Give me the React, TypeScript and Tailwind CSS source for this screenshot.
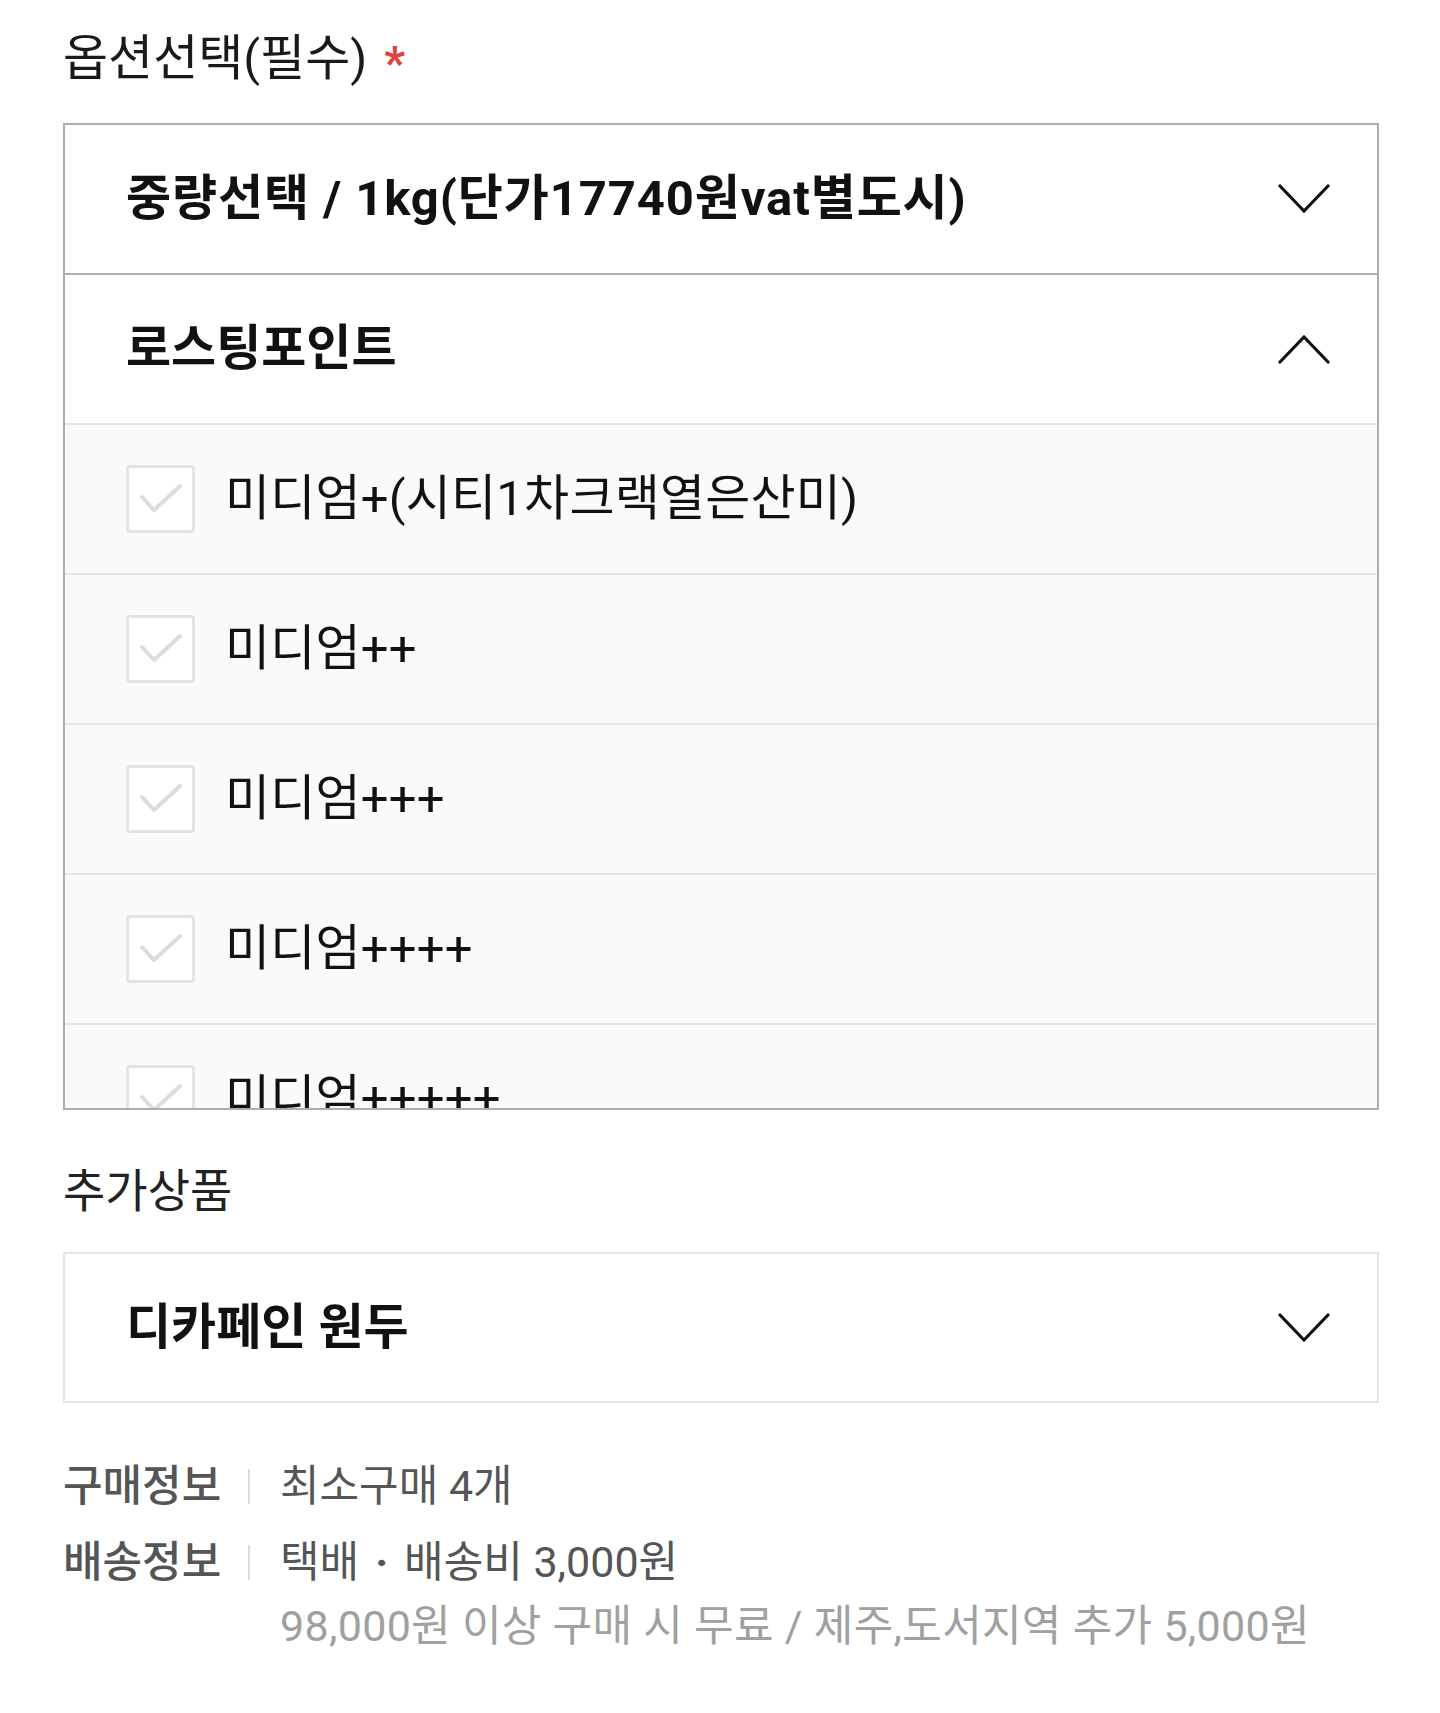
import React from "react";

function Chevron({ up = false }: { up?: boolean }) {
  return (
    <svg width="52" height="32" viewBox="0 0 52 32" fill="none" className="shrink-0">
      <path
        d={up ? "M2 29 L26 4 L50 29" : "M2 3 L26 28 L50 3"}
        stroke="#111"
        strokeWidth="3.2"
        strokeLinecap="round"
        strokeLinejoin="miter"
      />
    </svg>
  );
}

function CheckBox() {
  return (
    <div className="w-[69px] h-[68px] shrink-0 rounded-[4px] border-[3px] border-[#e4e4e4] bg-white flex items-center justify-center">
      <svg width="46" height="36" viewBox="0 0 46 36" fill="none">
        <path d="M4 16 L16 29 L42 5" stroke="#dcdcdc" strokeWidth="4" strokeLinecap="round" strokeLinejoin="round" />
      </svg>
    </div>
  );
}

const options = [
  "미디엄+(시티1차크랙열은산미)",
  "미디엄++",
  "미디엄+++",
  "미디엄++++",
  "미디엄+++++",
];

export default function App() {
  return (
    <div className="w-[1440px] min-h-[1713px] bg-white pl-[63px] pr-[61px] pt-[27px] font-['Roboto','Noto_Sans_CJK_KR',sans-serif] text-[#111]">
      <div className="flex items-center h-[64px] text-[49px] leading-[64px] text-[#1a1a1a]">
        <span>옵션선택(필수)</span>
        <span className="ml-[17px] text-[#e0413a] text-[46px] font-bold mt-[8px]">*</span>
      </div>

      <div className="mt-[32px] border-2 border-[#adadad] bg-white">
        <div className="h-[150px] border-b-2 border-[#adadad] flex items-center justify-between pl-[61px] pr-[47px]">
          <span className="text-[49px] font-bold tracking-[0.9px]">중량선택 / 1kg(단가17740원vat별도시)</span>
          <Chevron />
        </div>
        <div className="h-[150px] border-b-2 border-[#e6e6e6] flex items-center justify-between pl-[61px] pr-[47px]">
          <span className="text-[49px] font-bold">로스팅포인트</span>
          <Chevron up />
        </div>
        <div className="h-[683px] overflow-hidden bg-[#fafafa]">
          {options.map((o, i) => (
            <div
              key={i}
              className="h-[150px] border-b-2 border-[#e6e6e6] flex items-center pl-[61px] gap-[30px]"
            >
              <CheckBox />
              <span className="text-[49px] text-[#111] tracking-[0.2px]">{o}</span>
            </div>
          ))}
        </div>
      </div>

      <div className="mt-[51px] h-[60px] flex items-center text-[46px] text-[#222]">추가상품</div>

      <div className="mt-[31px] h-[151px] border-2 border-[#e4e4e4] flex items-center justify-between pl-[61px] pr-[47px]">
        <span className="text-[49px] font-bold">디카페인 원두</span>
        <Chevron />
      </div>

      <div className="mt-[51px] flex flex-col gap-[12px] text-[43px] leading-[64px]">
        <div className="flex items-start">
          <span className="w-[156px] shrink-0 whitespace-nowrap text-[#555] font-medium">구매정보</span>
          <span className="mt-[15px] ml-[29px] mr-[30px] w-[2px] h-[35px] bg-[#dddddd]" />
          <span className="text-[#555]">최소구매 4개</span>
        </div>
        <div className="flex items-start">
          <span className="w-[156px] shrink-0 whitespace-nowrap text-[#555] font-medium">배송정보</span>
          <span className="mt-[15px] ml-[29px] mr-[30px] w-[2px] h-[35px] bg-[#dddddd]" />
          <div className="flex flex-col">
            <span className="text-[#555] flex items-center">
              <span>택배</span>
              <span className="mx-[16px] font-bold">·</span>
              <span>배송비 3,000원</span>
            </span>
            <span className="text-[#a0a0a0] tracking-[0.3px]">98,000원 이상 구매 시 무료 / 제주,도서지역 추가 5,000원</span>
          </div>
        </div>
      </div>
    </div>
  );
}
